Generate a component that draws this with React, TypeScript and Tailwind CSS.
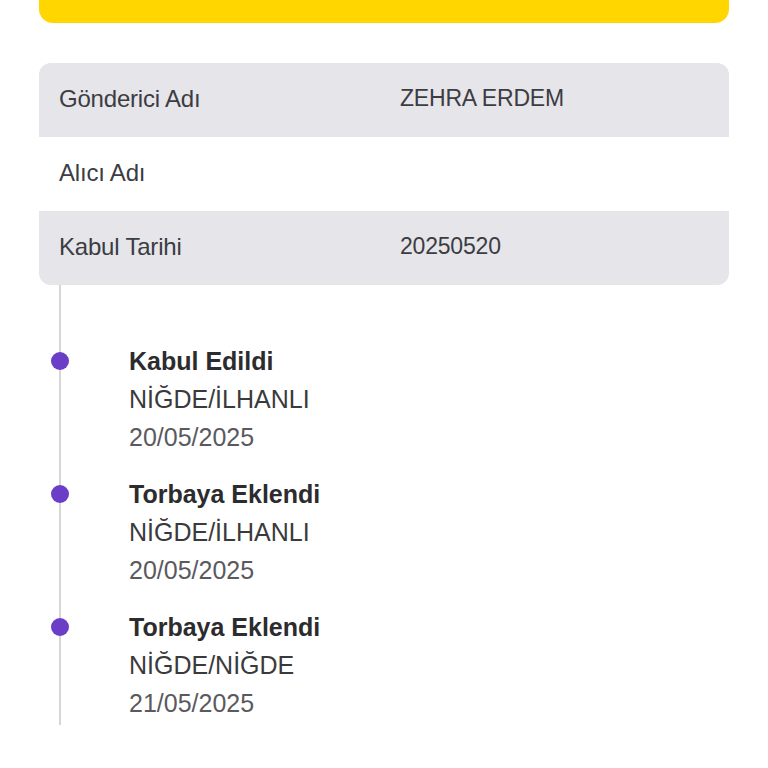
const rows = [
  { label: "Gönderici Adı", value: "ZEHRA ERDEM", gray: true },
  { label: "Alıcı Adı", value: "", gray: false },
  { label: "Kabul Tarihi", value: "20250520", gray: true },
];

const events = [
  { title: "Kabul Edildi", place: "NİĞDE/İLHANLI", date: "20/05/2025" },
  { title: "Torbaya Eklendi", place: "NİĞDE/İLHANLI", date: "20/05/2025" },
  { title: "Torbaya Eklendi", place: "NİĞDE/NİĞDE", date: "21/05/2025" },
];

export default function App() {
  return (
    <div
      className="min-h-[768px] bg-white px-[39px] text-[#3c3c43]"
      style={{ fontFamily: '"Liberation Sans", Arial, sans-serif' }}
    >
      {/* sorgula butonu (yukarı kaymış) */}
      <div className="-mt-[33px] h-[56px] rounded-[14px] bg-[#ffd600]" />

      {/* bilgi kartı */}
      <div className="mt-[40px] overflow-hidden rounded-[12px]">
        {rows.map((r) => (
          <div
            key={r.label}
            className={
              "flex h-[74px] items-center px-[20px] pb-[3px] text-[23px] tracking-[-0.2px] " +
              (r.gray ? "bg-[#e5e5ea]" : "bg-white")
            }
          >
            <span className="w-[341px] text-[24px]">{r.label}</span>
            <span>{r.value}</span>
          </div>
        ))}
      </div>

      {/* hareketler */}
      <div className="ml-[20px] flex flex-col gap-[19px] border-l-2 border-[#d6d6da] pb-[3px] pl-[68px] pt-[57px]">
        {events.map((e, i) => (
          <div key={i} className="relative text-[25px] leading-[38px]">
            <span className="absolute -left-[78px] top-[10px] h-[18px] w-[18px] rounded-full bg-[#6a3ec6]" />
            <div className="font-semibold text-[#2c2c2e]">{e.title}</div>
            <div className="text-[#3a3a3c]">{e.place}</div>
            <div className="text-[#5a5a5e]">{e.date}</div>
          </div>
        ))}
      </div>
    </div>
  );
}
